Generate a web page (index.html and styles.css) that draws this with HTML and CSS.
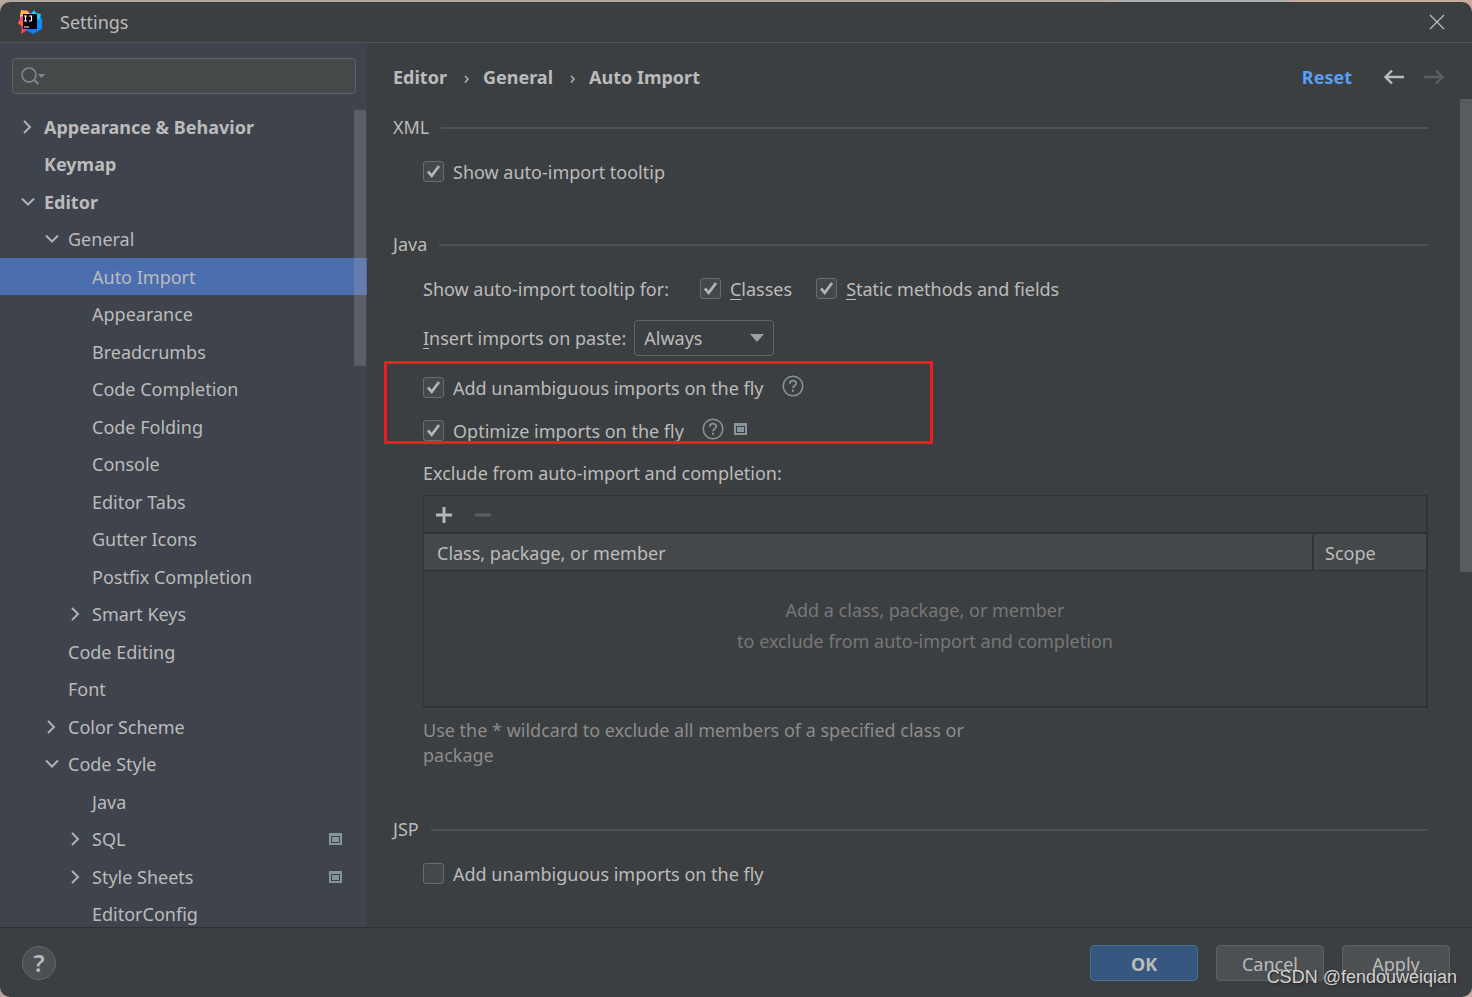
FILE: index.html
```html
<!DOCTYPE html>
<html lang="en">
<head>
<meta charset="utf-8">
<title>Settings</title>
<link rel="stylesheet" href="styles.css">
</head>
<body>
<svg class="defs" aria-hidden="true">
  <symbol id="right" viewBox="0 0 24 24"><path d="M8 6l6 6-6 6" fill="none" stroke="currentColor" stroke-width="2"/></symbol>
  <symbol id="down" viewBox="0 0 24 24"><path d="M6 8.500l6 6 6-6" fill="none" stroke="currentColor" stroke-width="2"/></symbol>
  <symbol id="project" viewBox="0 0 13 12"><path d="M0 0h13v12H0zM2 3v7h9V3z" fill="#87939a" fill-rule="evenodd"/><path d="M3 4h7v5H3z" fill="#87939a"/></symbol>
  <symbol id="tick" viewBox="0 0 21 21"><path d="M5 10.500l3.700 4.300L16 5" fill="none" stroke="#b4b4b4" stroke-width="2.700"/></symbol>
  <symbol id="help" viewBox="0 0 22 22"><circle cx="11" cy="11" r="9.800" fill="none" stroke="#87939a" stroke-width="1.500"/><path d="M7.800 8.800C7.800 4.600 14.200 4.700 14.200 8.300c0 2.400-3.200 2.400-3.200 4.900" fill="none" stroke="#87939a" stroke-width="1.800"/><path d="M10 14.700h2v2h-2z" fill="#87939a"/></symbol>
</svg>
<div class="window">
  <header class="titlebar">
    <svg class="logo" viewBox="0 0 24 24" aria-hidden="true">
      <path d="M3 1l6-1 5 4-3 15-8 5 1-7-4-4 2-4z" fill="#fc3c72"/>
      <path d="M3 0l6 1 3 3-9 6-1-4z" fill="#fdb74b"/>
      <path d="M0 13l5-6v9z" fill="#ff6c20"/>
      <path d="M10 4L3 7v5l6-3z" fill="#ee36b5"/>
      <path d="M11 4l5-3 2 2 5 2 1 14-9 5-7-4z" fill="#087cfa"/>
      <path d="M16 0l2 3 5 1-2 7-8-7z" fill="#20cbf2"/>
      <path d="M20 11l4-3v10l-5 3z" fill="#148cf3"/>
      <path d="M5 4h14v15H5z" fill="#090307"/>
      <path d="M6 6h3M7.500 6v5M6 11h3M11 6h2.500v4q0 1-1 1H11M6 17h5" fill="none" stroke="#fff" stroke-width="1.200"/>
    </svg>
    <h1 class="title">Settings</h1>
    <button class="icon-button" type="button" aria-label="Close"><svg width="16" height="16" viewBox="0 0 16 16"><path d="M1 1l14 14M15 1L1 15" fill="none" stroke="#b9bbbc" stroke-width="1.300"/></svg></button>
  </header>
  <div class="body">
    <aside class="sidebar">
      <div class="search">
        <svg width="26" height="20" viewBox="0 0 26 20" aria-hidden="true"><circle cx="9" cy="9" r="7" fill="none" stroke="#7f8b93" stroke-width="1.600"/><path d="M13.500 13.500l5 4.500" stroke="#7f8b93" stroke-width="2"/><path d="M18 8h7l-3.500 4z" fill="#7f8b93"/></svg>
        <input class="search-input" type="text" aria-label="Search settings">
      </div>
      <nav class="tree-view" aria-label="Settings categories">
        <ul class="tree">
          <li><a class="node top" href="#"><svg class="chevron"><use href="#right"/></svg>Appearance &amp; Behavior</a></li>
          <li><a class="node top" href="#"><span class="chevron"></span>Keymap</a></li>
          <li><a class="node top" href="#"><svg class="chevron"><use href="#down"/></svg>Editor</a></li>
          <li><a class="node second" href="#"><svg class="chevron"><use href="#down"/></svg>General</a></li>
          <li><a class="node third selected" href="#" aria-current="page"><span class="chevron"></span>Auto Import</a></li>
          <li><a class="node third" href="#"><span class="chevron"></span>Appearance</a></li>
          <li><a class="node third" href="#"><span class="chevron"></span>Breadcrumbs</a></li>
          <li><a class="node third" href="#"><span class="chevron"></span>Code Completion</a></li>
          <li><a class="node third" href="#"><span class="chevron"></span>Code Folding</a></li>
          <li><a class="node third" href="#"><span class="chevron"></span>Console</a></li>
          <li><a class="node third" href="#"><span class="chevron"></span>Editor Tabs</a></li>
          <li><a class="node third" href="#"><span class="chevron"></span>Gutter Icons</a></li>
          <li><a class="node third" href="#"><span class="chevron"></span>Postfix Completion</a></li>
          <li><a class="node third" href="#"><svg class="chevron"><use href="#right"/></svg>Smart Keys</a></li>
          <li><a class="node second" href="#"><span class="chevron"></span>Code Editing</a></li>
          <li><a class="node second" href="#"><span class="chevron"></span>Font</a></li>
          <li><a class="node second" href="#"><svg class="chevron"><use href="#right"/></svg>Color Scheme</a></li>
          <li><a class="node second" href="#"><svg class="chevron"><use href="#down"/></svg>Code Style</a></li>
          <li><a class="node third" href="#"><span class="chevron"></span>Java</a></li>
          <li><a class="node third" href="#"><svg class="chevron"><use href="#right"/></svg>SQL<svg class="project end"><use href="#project"/></svg></a></li>
          <li><a class="node third" href="#"><svg class="chevron"><use href="#right"/></svg>Style Sheets<svg class="project end"><use href="#project"/></svg></a></li>
          <li><a class="node third" href="#"><span class="chevron"></span>EditorConfig</a></li>
        </ul>
        <div class="tree-thumb"></div>
      </nav>
    </aside>
    <main class="main">
      <div class="page-head">
        <nav class="crumbs" aria-label="Breadcrumb"><span>Editor</span><span class="crumb-sep">›</span><span>General</span><span class="crumb-sep">›</span><span>Auto Import</span></nav>
        <a class="reset" href="#">Reset</a>
        <button class="icon-button" type="button" aria-label="Back"><svg width="20" height="16" viewBox="0 0 20 16"><path d="M20 8H2M8 1.500L1.500 8 8 14.500" fill="none" stroke="#b9bbbc" stroke-width="2.400"/></svg></button>
        <button class="icon-button forward" type="button" aria-label="Forward" disabled><svg width="20" height="16" viewBox="0 0 20 16"><path d="M0 8h18M12 1.500L18.500 8 12 14.500" fill="none" stroke="#5c5e60" stroke-width="2.400"/></svg></button>
      </div>
      <div class="scroll">
        <div class="content">
          <section class="group">
            <h2 class="group-title">XML</h2>
            <div class="fields">
              <div class="row"><label class="check"><span class="box"><input type="checkbox" checked><svg><use href="#tick"/></svg></span>Show auto-import tooltip</label></div>
            </div>
          </section>
          <section class="group">
            <h2 class="group-title">Java</h2>
            <div class="fields">
              <div class="row tooltip-row"><span class="lead">Show auto-import tooltip for:</span>
                <label class="check"><span class="box"><input type="checkbox" checked><svg><use href="#tick"/></svg></span><span><u>C</u>lasses</span></label>
                <label class="check"><span class="box"><input type="checkbox" checked><svg><use href="#tick"/></svg></span><span><u>S</u>tatic methods and fields</span></label>
              </div>
              <div class="row paste-row"><label for="paste"><u>I</u>nsert imports on paste:</label>
                <span class="select"><select id="paste"><option>Always</option><option>Ask</option><option>Never</option></select><svg width="14" height="8" viewBox="0 0 14 8"><path d="M0 0h14L7 8z" fill="#9da0a3"/></svg></span>
              </div>
              <div class="marked">
                <div class="row"><label class="check"><span class="box"><input type="checkbox" checked><svg><use href="#tick"/></svg></span>Add unambiguous imports on the fly</label><svg class="help-icon"><use href="#help"/></svg></div>
                <div class="row"><label class="check"><span class="box"><input type="checkbox" checked><svg><use href="#tick"/></svg></span>Optimize imports on the fly</label><svg class="help-icon"><use href="#help"/></svg><svg class="project"><use href="#project"/></svg></div>
                <div class="marker"></div>
              </div>
              <div class="row">Exclude from auto-import and completion:</div>
              <div class="exclude">
                <div class="toolbar">
                  <button class="icon-button" type="button" aria-label="Add"><svg width="16" height="16" viewBox="0 0 16 16"><path d="M8 0v16M0 8h16" stroke="#b4b6b8" stroke-width="3"/></svg></button>
                  <button class="icon-button" type="button" aria-label="Remove" disabled><svg width="16" height="16" viewBox="0 0 16 16"><path d="M0 8h16" stroke="#5c5e60" stroke-width="3"/></svg></button>
                </div>
                <table class="table">
                  <thead><tr><th>Class, package, or member</th><th class="scope"><span>Scope</span></th></tr></thead>
                  <tbody><tr><td colspan="2">Add a class, package, or member<br>to exclude from auto-import and completion</td></tr></tbody>
                </table>
              </div>
              <p class="hint">Use the * wildcard to exclude all members of a specified class or package</p>
            </div>
          </section>
          <section class="group">
            <h2 class="group-title">JSP</h2>
            <div class="fields">
              <div class="row"><label class="check"><span class="box"><input type="checkbox"><svg><use href="#tick"/></svg></span>Add unambiguous imports on the fly</label></div>
            </div>
          </section>
        </div>
        <div class="page-thumb"></div>
      </div>
    </main>
  </div>
  <footer class="footer">
    <button class="help-button" type="button" aria-label="Help">?</button>
    <button class="button primary" type="button">OK</button>
    <button class="button" type="button">Cancel</button>
    <button class="button" type="button">Apply</button>
  </footer>
</div>
<div class="watermark">CSDN @fendouweiqian</div>
</body>
</html>
```
FILE: styles.css
```css
* { box-sizing: border-box; }
body {
  margin: 0;
  height: 100vh;
  padding-top: 2px;
  overflow: hidden;
  position: relative;
  background: linear-gradient(90deg, #b8a79f 0 75%, #a9adb0 76% 87%, #c9aba0 88%);
  color: #bbbbbb;
  font: 18px/24px "Noto Sans", "Open Sans", sans-serif;
}
button, input, select { font: inherit; color: inherit; }
a { color: inherit; text-decoration: none; }
u { text-underline-offset: 3px; text-decoration-thickness: 1px; }
.defs { display: none; }
.window {
  height: 100%;
  display: flex;
  flex-direction: column;
  overflow: hidden;
  border-radius: 10px;
  background: #3c3f41;
}
.titlebar {
  flex: none;
  display: flex;
  align-items: center;
  height: 41px;
  padding: 0 27px 1px 18px;
  border-bottom: 1px solid #515456;
}
.logo { width: 24px; height: 24px; }
.title { flex: 1; margin: 0 0 0 18px; font-size: 18px; font-weight: 400; }
.icon-button {
  display: flex;
  padding: 0;
  border: 0;
  background: none;
}
.body { flex: 1; min-height: 0; display: flex; }
.sidebar {
  flex: 0 0 367px;
  display: flex;
  flex-direction: column;
  background: #3f434c;
}
.search {
  flex: none;
  display: flex;
  align-items: center;
  height: 36px;
  margin: 15px 11px 14px 12px;
  padding: 0 7px;
  border: 1px solid #646464;
  border-radius: 4px;
  background: #45494a;
}
.search-input { flex: 1; min-width: 0; border: 0; outline: 0; background: none; }
.tree-view { flex: 1; min-height: 0; position: relative; overflow: hidden; }
.tree { margin: 0; padding: 0; list-style: none; }
.node { display: flex; align-items: center; gap: 4px; height: 37px; padding-right: 25px; }
li:nth-child(even) .node { height: 38px; }
.top { padding-left: 16px; font-weight: 700; }
.second { padding-left: 40px; }
.third { padding-left: 64px; }
.selected { background: #4b6eaf; }
.chevron { flex: none; width: 24px; height: 24px; color: #afb1b3; }
.project { flex: none; width: 13px; height: 12px; }
.end { margin-left: auto; }
.tree-thumb {
  position: absolute;
  top: 2px;
  right: 1px;
  width: 12px;
  height: 256px;
  background: rgba(166, 166, 166, 0.28);
}
.main { flex: 1; min-width: 0; display: flex; flex-direction: column; }
.page-head {
  flex: none;
  display: flex;
  align-items: center;
  height: 56px;
  padding: 12px 28px 0 26px;
  font-weight: 700;
}
.crumbs { flex: 1; display: flex; }
.crumb-sep { width: 36px; padding-left: 3px; text-align: center; font-weight: 400; }
.reset { margin-right: 32px; color: #589df6; }
.forward { margin-left: 20px; }
.scroll { flex: 1; min-height: 0; display: flex; overflow: hidden; }
.content { flex: 1; min-width: 0; padding: 14px 32px 0 26px; }
.page-thumb { flex: none; width: 12px; height: 473px; background: #595b5d; }
.group { margin-bottom: 46px; }
.group-title {
  display: flex;
  align-items: center;
  gap: 12px;
  height: 28px;
  margin: 0 0 19px;
  font-size: 18px;
  font-weight: 400;
}
.group-title::after { content: ""; flex: 1; height: 2px; margin-top: 2px; background: #515151; }
.fields { padding-left: 30px; }
.row { display: flex; align-items: center; min-height: 24px; }
.check { display: flex; align-items: center; gap: 9px; }
.box { display: grid; width: 21px; height: 21px; margin-bottom: 2px; }
.box > * { grid-area: 1 / 1; width: 21px; height: 21px; margin: 0; }
.box input { appearance: none; border: 1px solid #6b6b6b; border-radius: 3px; background: #43494a; }
.box svg { visibility: hidden; pointer-events: none; }
.box input:checked + svg { visibility: visible; }
.tooltip-row { gap: 24px; }
.lead { padding-right: 7px; }
.paste-row { gap: 8px; margin: 19px 0 20px; }
.select { position: relative; display: flex; width: 140px; height: 36px; }
.select select {
  flex: 1;
  appearance: none;
  padding: 0 9px;
  border: 1px solid #646464;
  border-radius: 4px;
  background: #3c3f41;
}
.select svg { position: absolute; right: 10px; top: 14px; pointer-events: none; }
.marked { position: relative; display: grid; gap: 19px; margin-bottom: 18px; }
.marker { position: absolute; top: -15px; left: -39px; width: 549px; height: 83px; border: 3px solid #ee1c24; pointer-events: none; }
.help-icon { width: 22px; height: 22px; margin: -2px 10px 2px 18px; }
.marked .project { margin-bottom: 4px; }
.exclude { margin-top: 10px; border: 1px solid #323232; border-right-width: 2px; border-bottom-width: 2px; }
.toolbar { display: flex; align-items: center; gap: 23px; height: 36px; padding: 2px 12px 0; }
.table { width: 100%; border-collapse: separate; border-spacing: 0; table-layout: fixed; }
.table th {
  height: 39px;
  padding: 1px 13px 0;
  border-top: 2px solid #323232;
  border-bottom: 1px solid #323232;
  background: #45484a;
  font-weight: 400;
  text-align: left;
}
.table .scope { width: 114px; padding: 0; }
.scope span { display: block; padding: 6px 0 5px 11px; border-left: 2px solid #323232; }
.table td { height: 135px; padding: 0 0 26px; color: #777777; line-height: 31px; text-align: center; }
.hint { max-width: 580px; margin: 10px 0 0; padding-bottom: 1px; color: #8c8c8c; line-height: 25px; }
.footer {
  flex: none;
  display: flex;
  align-items: center;
  gap: 18px;
  height: 70px;
  padding: 1px 22px 0;
  border-top: 1px solid #2f3234;
}
.help-button {
  width: 34px;
  height: 34px;
  margin-right: auto;
  padding: 0;
  border: 1px solid #656868;
  border-radius: 50%;
  background: #4c5052;
  font-size: 24px;
  font-weight: 600;
}
.button {
  width: 108px;
  height: 36px;
  padding: 2px 0 0;
  border: 1px solid #5e6060;
  border-radius: 4px;
  background: #4c5052;
}
.primary { border-color: #4c708c; background: #365880; font-weight: 700; }
.watermark {
  position: absolute;
  right: 15px;
  bottom: 8px;
  color: #d2d2d2;
  font: 18px/24px "Liberation Sans", sans-serif;
  text-shadow: 1px 1px 2px #222222;
}
```
